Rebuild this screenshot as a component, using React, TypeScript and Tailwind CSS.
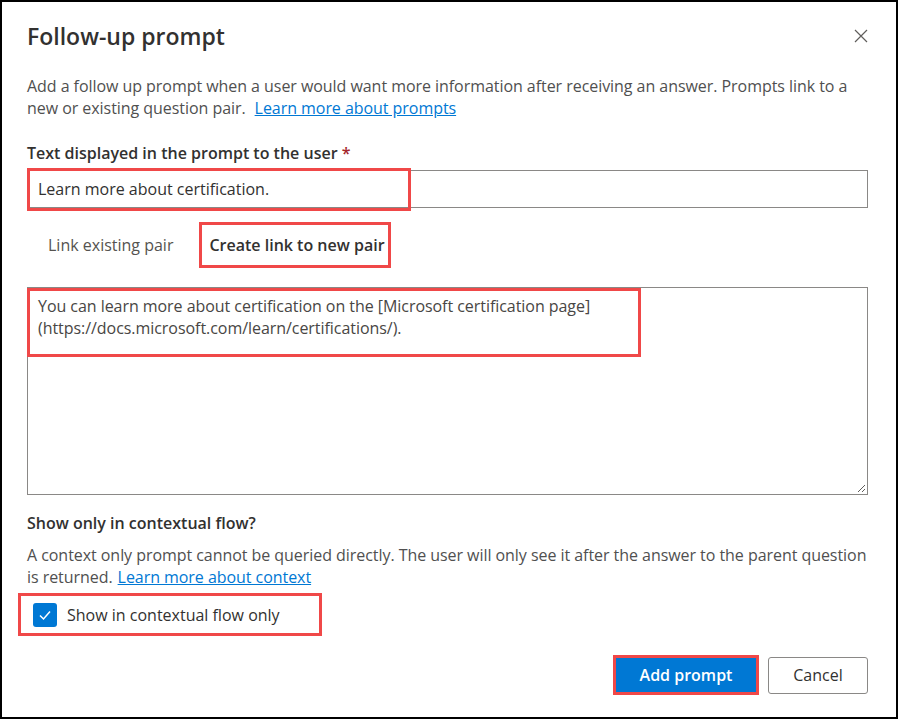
import { useState } from "react";

// Fluent-ish dialog for adding a follow-up prompt
const FONT = { fontFamily: '"Open Sans", "Noto Sans", Arial, sans-serif' };

function CloseIcon() {
  return (
    <svg width="16" height="16" viewBox="0 0 16 16" fill="none" stroke="#605e5c" strokeWidth="1.2">
      <path d="M2 2 L14 14 M14 2 L2 14" />
    </svg>
  );
}

export default function App() {
  const [tab, setTab] = useState<"existing" | "new">("new");
  const [contextOnly, setContextOnly] = useState(true);

  return (
    <div className="w-[898px] h-[719px] bg-white border-2 border-black flex flex-col pl-[25px] pr-[28px] text-[#323130]" style={FONT}>
      <div className="flex items-start justify-between h-[73px] pt-[18px]">
        <h1 className="text-[23px] leading-[32px] font-semibold text-[#323130]">Follow-up prompt</h1>
        <button className="mr-[-5px] mt-[4px] p-1">
          <CloseIcon />
        </button>
      </div>

      <div className="text-[16px] leading-[22px] tracking-[-0.05px] text-[#505050]">
        <div>Add a follow up prompt when a user would want more information after receiving an answer. Prompts link to a</div>
        <div>
          <span>new or existing question pair.</span>
          <a href="#" className="ml-[9px] text-[#0078d4] underline">Learn more about prompts</a>
        </div>
      </div>

      <label className="mt-[24px] text-[16px] font-semibold leading-[20px]">
        Text displayed in the prompt to the user <span className="text-[#a4262c]">*</span>
      </label>
      <div className="relative mt-[7px] h-[38px] border border-[#8a8886] flex items-center px-[10px]">
        <span className="text-[16px]">Learn more about certification.</span>
        <div className="absolute left-[-1px] top-[-3px] w-[384px] h-[43px] border-[3px] border-[#f04848]" />
      </div>

      <div className="flex items-center h-[46px] mt-[14px]">
        <button
          onClick={() => setTab("existing")}
          className={"ml-[21px] text-[16px] " + (tab === "existing" ? "font-semibold" : "text-[#55534f]")}
        >
          Link existing pair
        </button>
        <div className="ml-[26px] h-[46px] w-[192px] border-[3px] border-[#f04848] flex items-center pl-[7px]">
          <button
            onClick={() => setTab("new")}
            className={"text-[16px] " + (tab === "new" ? "font-semibold" : "")}
          >
            Create link to new pair
          </button>
        </div>
      </div>

      <div className="relative mt-[19px] h-[208px] border border-[#8a8886] px-[10px] pt-[7px]">
        <div className="text-[16px] leading-[22px] tracking-[-0.05px] text-[#484644]">
          <div>You can learn more about certification on the [Microsoft certification page]</div>
          <div>(https://docs.microsoft.com/learn/certifications/).</div>
        </div>
        <div className="absolute left-[-1px] top-[0px] w-[614px] h-[69px] border-[3px] border-[#f04848]" />
        <svg className="absolute right-[1px] bottom-[1px]" width="10" height="10" viewBox="0 0 10 10" stroke="#605e5c" strokeWidth="1">
          <path d="M2 9 L9 2 M6 9 L9 6" />
        </svg>
      </div>

      <div className="mt-[18px] text-[16px] font-semibold leading-[20px]">Show only in contextual flow?</div>
      <div className="mt-[11px] text-[16px] leading-[22px] tracking-[-0.05px] text-[#505050]">
        <div>A context only prompt cannot be queried directly. The user will only see it after the answer to the parent question</div>
        <div>
          <span>is returned.</span>
          <a href="#" className="ml-[5px] text-[#0078d4] underline">Learn more about context</a>
        </div>
      </div>

      <div className="mt-[5px] ml-[-9px] w-[304px] h-[43px] border-[3px] border-[#f04848] flex items-center pl-[12px]">
        <button
          onClick={() => setContextOnly(!contextOnly)}
          className={"w-[24px] h-[24px] rounded-[3px] flex items-center justify-center " + (contextOnly ? "bg-[#0078d4]" : "border border-[#323130]")}
        >
          {contextOnly && (
            <svg width="14" height="14" viewBox="0 0 14 14" fill="none" stroke="white" strokeWidth="1.5">
              <path d="M2 7.5 L5.5 11 L12 3.5" />
            </svg>
          )}
        </button>
        <span className="ml-[10px] text-[16px] text-[#323130]">Show in contextual flow only</span>
      </div>

      <div className="flex justify-end items-center gap-[9px] mt-[19px]">
        <div className="border-[3px] border-[#f04848]">
          <button className="block w-[140px] h-[34px] bg-[#0078d4] text-white text-[16px] font-semibold">Add prompt</button>
        </div>
        <button className="w-[100px] h-[37px] rounded-[3px] border border-[#8a8886] bg-white text-[16px] text-[#323130]">
          Cancel
        </button>
      </div>
    </div>
  );
}
